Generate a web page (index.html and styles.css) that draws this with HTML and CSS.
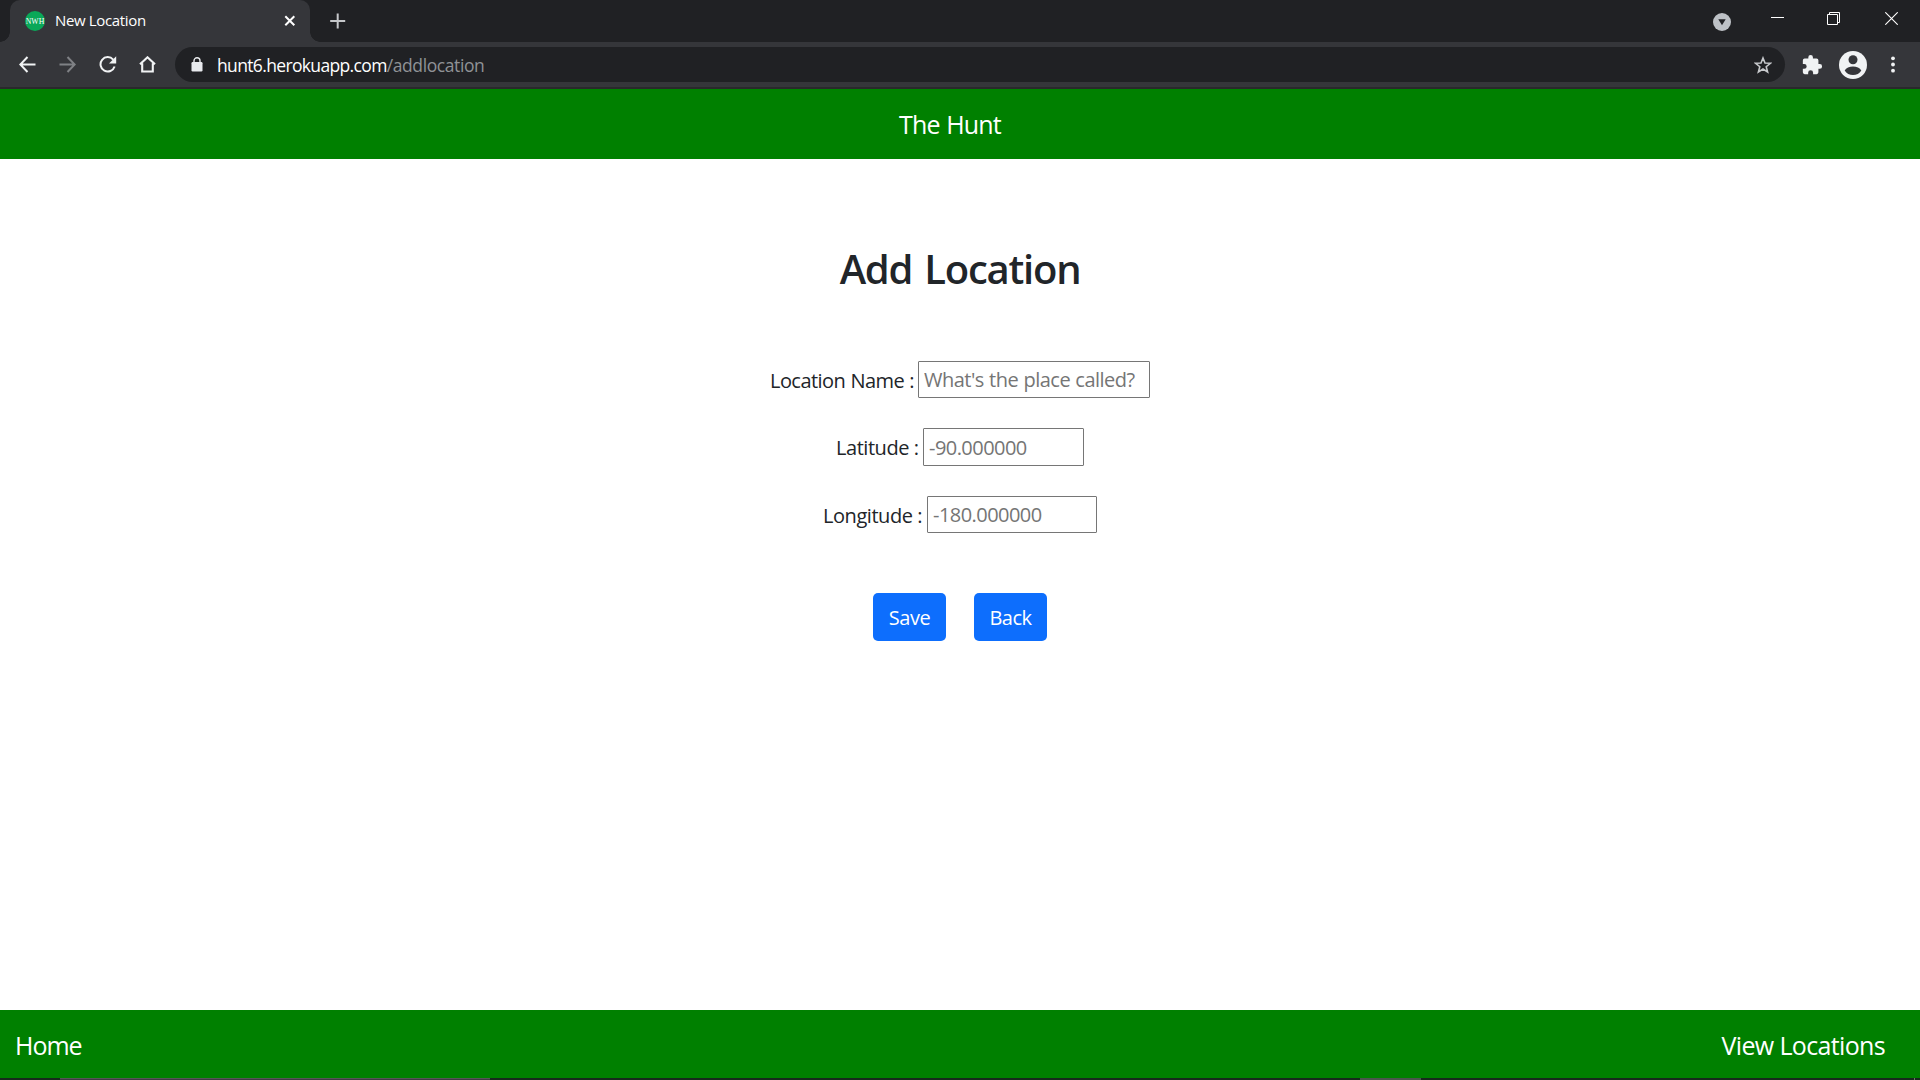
FILE: index.html
```html
<!DOCTYPE html>
<html lang="en">
<head>
<meta charset="utf-8">
<title>New Location</title>
<link rel="stylesheet" href="styles.css">
</head>
<body>
<header class="tabstrip">
  <div class="tab">
    <svg class="favicon" width="20" height="20" viewBox="0 0 20 20"><circle cx="10" cy="10" r="10" fill="#0aa858"/><text x="10" y="12.8" text-anchor="middle" textLength="18.5" lengthAdjust="spacingAndGlyphs">NWH</text></svg>
    <span class="tab-title">New Location</span>
    <svg class="tab-close" width="12" height="12" viewBox="0 0 12 12"><path d="M1.3 1.3l9 9M10.3 1.3l-9 9" stroke="#fff" stroke-width="2"/></svg>
  </div>
  <svg class="new-tab" width="16" height="16" viewBox="0 0 16 16"><path d="M7.7 .5v15M.2 8h15" stroke="#c5c7ca" stroke-width="2"/></svg>
  <div class="window-controls">
    <svg width="18" height="18" viewBox="0 0 18 18"><circle cx="9" cy="9" r="9" fill="#bdc1c6"/><path d="M5.3 6.3h7.4L9 12.3z" fill="#202124"/></svg>
    <svg width="13" height="13" viewBox="0 0 13 13"><path d="M0 5.5h13" stroke="#fff"/></svg>
    <svg width="13" height="13" viewBox="0 0 13 13" fill="none" stroke="#fff"><path d="M.5 2.5h10v10H.5zM2.5 2.5v-2h10v10h-2"/></svg>
    <svg width="13" height="13" viewBox="0 0 13 13"><path d="M.3.3l12.4 12.4M12.7.3L.3 12.7" stroke="#fff" stroke-width="1.1"/></svg>
  </div>
</header>
<nav class="toolbar">
  <div class="nav-buttons">
    <svg width="17" height="17" viewBox="0 0 17 17" fill="none" stroke="#f1f3f4" stroke-width="2"><path d="M16.5 8.5H2M8.5 1L1.3 8.5l7.2 7.5"/></svg>
    <svg width="17" height="17" viewBox="0 0 17 17" fill="none" stroke="#7f8185" stroke-width="2"><path d="M.5 8.5H15M8.5 1l7.2 7.5L8.5 16"/></svg>
    <svg width="18" height="17" viewBox="0 0 18 17"><path d="M14.2 3.6A7.2 7.2 0 1 0 15.6 10.5" fill="none" stroke="#f1f3f4" stroke-width="2"/><path d="M17.2 .3v7.2H10z" fill="#f1f3f4"/></svg>
    <svg width="17" height="17" viewBox="0 0 17 17"><path d="M1 8.3L8.5 1.3 16 8.3M3.2 7.2V15.5h10.6V7.2" fill="none" stroke="#f1f3f4" stroke-width="2.1"/></svg>
  </div>
  <div class="omnibox">
    <svg class="lock" width="12" height="15" viewBox="0 0 12 15"><rect x=".5" y="5" width="11" height="9.5" rx="1.2" fill="#e8eaed"/><path d="M3 5.5V3.8a3 3 0 0 1 6 0v1.7" fill="none" stroke="#e8eaed" stroke-width="1.4"/></svg>
    <span class="url-host">hunt6.herokuapp.com</span><span class="url-path">/addlocation</span>
    <svg class="star" width="18" height="18" viewBox="0 0 18 18"><path d="M9 2l2 5 5.4.3-4.2 3.4 1.4 5.3L9 13l-4.6 3 1.4-5.3L1.6 7.3 7 7z" fill="none" stroke="#c6c8cb" stroke-width="1.6"/></svg>
  </div>
  <svg class="puzzle" width="22" height="22" viewBox="0 0 24 24"><path fill="#f1f3f4" d="M20.5 11H19V7a2 2 0 0 0-2-2h-4V3.500a2.500 2.500 0 0 0-5 0V5H4a2 2 0 0 0-1.990 2v3.800H3.500a2.700 2.700 0 0 1 0 5.400H2V20a2 2 0 0 0 2 2h3.800v-1.500a2.700 2.700 0 0 1 5.400 0V22H17a2 2 0 0 0 2-2v-4h1.500a2.500 2.500 0 0 0 0-5z"/></svg>
  <svg class="avatar" width="28" height="28" viewBox="0 0 28 28"><circle cx="14" cy="14" r="14" fill="#f1f3f4"/><circle cx="14" cy="8.700" r="4.500" fill="#35363a"/><path d="M5.700 19.500C7 16.700 10.500 15.500 14 15.500s7 1.200 8.300 4C20.500 22.500 17.500 24 14 24s-6.500-1.500-8.300-4.500z" fill="#35363a"/></svg>
  <svg width="4" height="17" viewBox="0 0 4 17" fill="#f1f3f4"><circle cx="2" cy="2.300" r="1.900"/><circle cx="2" cy="8.500" r="1.900"/><circle cx="2" cy="14.700" r="1.900"/></svg>
</nav>
<div class="brand-bar"><span class="brand">The Hunt</span></div>
<main class="page">
  <h1><span>Add Location</span></h1>
  <form class="form">
    <div class="row row-name"><label for="name">Location Name :</label><input id="name" placeholder="What's the place called?"></div>
    <div class="row row-lat"><label for="lat">Latitude :</label><input id="lat" placeholder="-90.000000"></div>
    <div class="row row-lng"><label for="lng">Longitude :</label><input id="lng" placeholder="-180.000000"></div>
    <div class="actions"><button type="button">Save</button><button type="button">Back</button></div>
  </form>
</main>
<footer class="bottom-nav"><span class="home">Home</span><span class="view">View Locations</span></footer>
<div class="taskbar"><i class="task-main"></i><i class="task-item"></i><i class="task-edge"></i></div>
</body>
</html>
```
FILE: styles.css
```css
* { box-sizing: border-box; }
body {
  margin: 0;
  height: 1080px;
  overflow: hidden;
  display: flex;
  flex-direction: column;
  background: #fff;
  color: #212529;
  font: 20px/30px "Open Sans", "Noto Sans", sans-serif;
}
svg { display: block; flex: none; }

.tabstrip {
  flex: none;
  height: 42px;
  display: flex;
  background: #202124;
}
.tab {
  position: relative;
  width: 300px;
  margin-left: 10px;
  padding: 0 14px 0 15px;
  display: flex;
  align-items: center;
  background: #35363a;
  border-radius: 10px 10px 0 0;
}
.tab::before, .tab::after {
  content: "";
  position: absolute;
  bottom: 0;
  width: 10px;
  height: 10px;
}
.tab::before { left: -10px; background: radial-gradient(circle at 0 0, transparent 9.5px, #35363a 10px); }
.tab::after { right: -10px; background: radial-gradient(circle at 100% 0, transparent 9.5px, #35363a 10px); }
.favicon text { font: 8px "Liberation Serif", serif; fill: #fff; }
.tab-title { margin-left: 10px; padding-bottom: 2px; font-size: 15px; letter-spacing: -0.35px; color: #fff; white-space: nowrap; }
.tab-close { margin-left: auto; }
.new-tab { margin: 13px 0 0 20px; }
.window-controls {
  margin: 12px 22px 0 auto;
  display: grid;
  grid-template-columns: 58px 56px 58px 13px;
}
.window-controls svg:first-child { margin-top: 1px; }

.toolbar {
  flex: none;
  height: 47px;
  padding: 0 25px 0 19px;
  display: flex;
  align-items: center;
  background: #35363a;
  border-bottom: 2px solid #29292b;
}
.nav-buttons { width: 156px; display: grid; grid-template-columns: 40px 40px 40px 17px; align-items: center; }
.omnibox {
  width: 1610px;
  height: 35px;
  padding: 0 13px 0 16px;
  display: flex;
  align-items: center;
  border-radius: 18px;
  background: #202124;
  font-size: 17.5px;
  white-space: nowrap;
}
.url-host { margin-left: 14px; color: #fff; letter-spacing: -0.65px; }
.url-path { color: #8f9296; letter-spacing: -0.4px; }
.star { margin-left: auto; }
.puzzle { margin-left: 16px; }
.avatar { margin: 0 24px 0 16px; }

.brand-bar { flex: none; height: 70px; padding: 20px 0 0 899px; background: green; color: #fff; font-size: 25px; }
.brand { letter-spacing: -0.85px; word-spacing: 1px; }

.page { flex: 1; }
h1 { margin: 86px 0 0; height: 48px; text-align: center; font-size: 40px; line-height: 48px; font-weight: 600; }
h1 span { letter-spacing: -1.25px; word-spacing: 3px; }
.form { margin-top: 68px; }
.row { display: flex; align-items: center; height: 37px; white-space: nowrap; }
.row label { padding-top: 2px; letter-spacing: -0.45px; }
.row input {
  height: 37px;
  padding: 0 5px;
  border: 1px solid #767676;
  border-radius: 1px;
  background: #fff;
  font: inherit;
}
.row input::placeholder { color: #757575; opacity: 1; letter-spacing: inherit; }
.row-name label { width: 148px; letter-spacing: -0.55px; word-spacing: 0.5px; }
.row-name { padding-left: 770px; }
.row-name input { width: 232px; letter-spacing: -0.5px; word-spacing: 0.5px; }
.row-lat { margin-top: 30px; height: 38px; padding-left: 836px; }
.row-lat label { width: 87px; }
.row-lat input { width: 161px; height: 38px; letter-spacing: -0.55px; }
.row-lng { margin-top: 30px; padding-left: 823px; }
.row-lng label { width: 104px; }
.row-lng input { width: 170px; letter-spacing: -0.55px; }
.actions { margin-top: 60px; display: flex; justify-content: center; gap: 28px; }
.actions button {
  width: 73px;
  height: 48px;
  padding: 2px 0 0;
  border: 0;
  border-radius: 5px;
  background: #0d6efd;
  color: #fff;
  font: inherit;
  letter-spacing: -0.5px;
}

.bottom-nav {
  flex: none;
  height: 68px;
  padding: 20px 35px 0 15px;
  display: flex;
  justify-content: space-between;
  background: green;
  color: #fff;
  font-size: 25px;
}
.home { letter-spacing: -1px; }
.view { letter-spacing: -0.65px; }
.taskbar { flex: none; height: 2px; display: flex; background: #17291c; }
.task-main { margin-left: 60px; width: 430px; background: #403a42; border-top: 1px solid #565656; }
.task-item { margin-left: 870px; width: 61px; background: #4b554d; }
.task-edge { margin-left: 493px; width: 1px; background: #6b756d; }
```
